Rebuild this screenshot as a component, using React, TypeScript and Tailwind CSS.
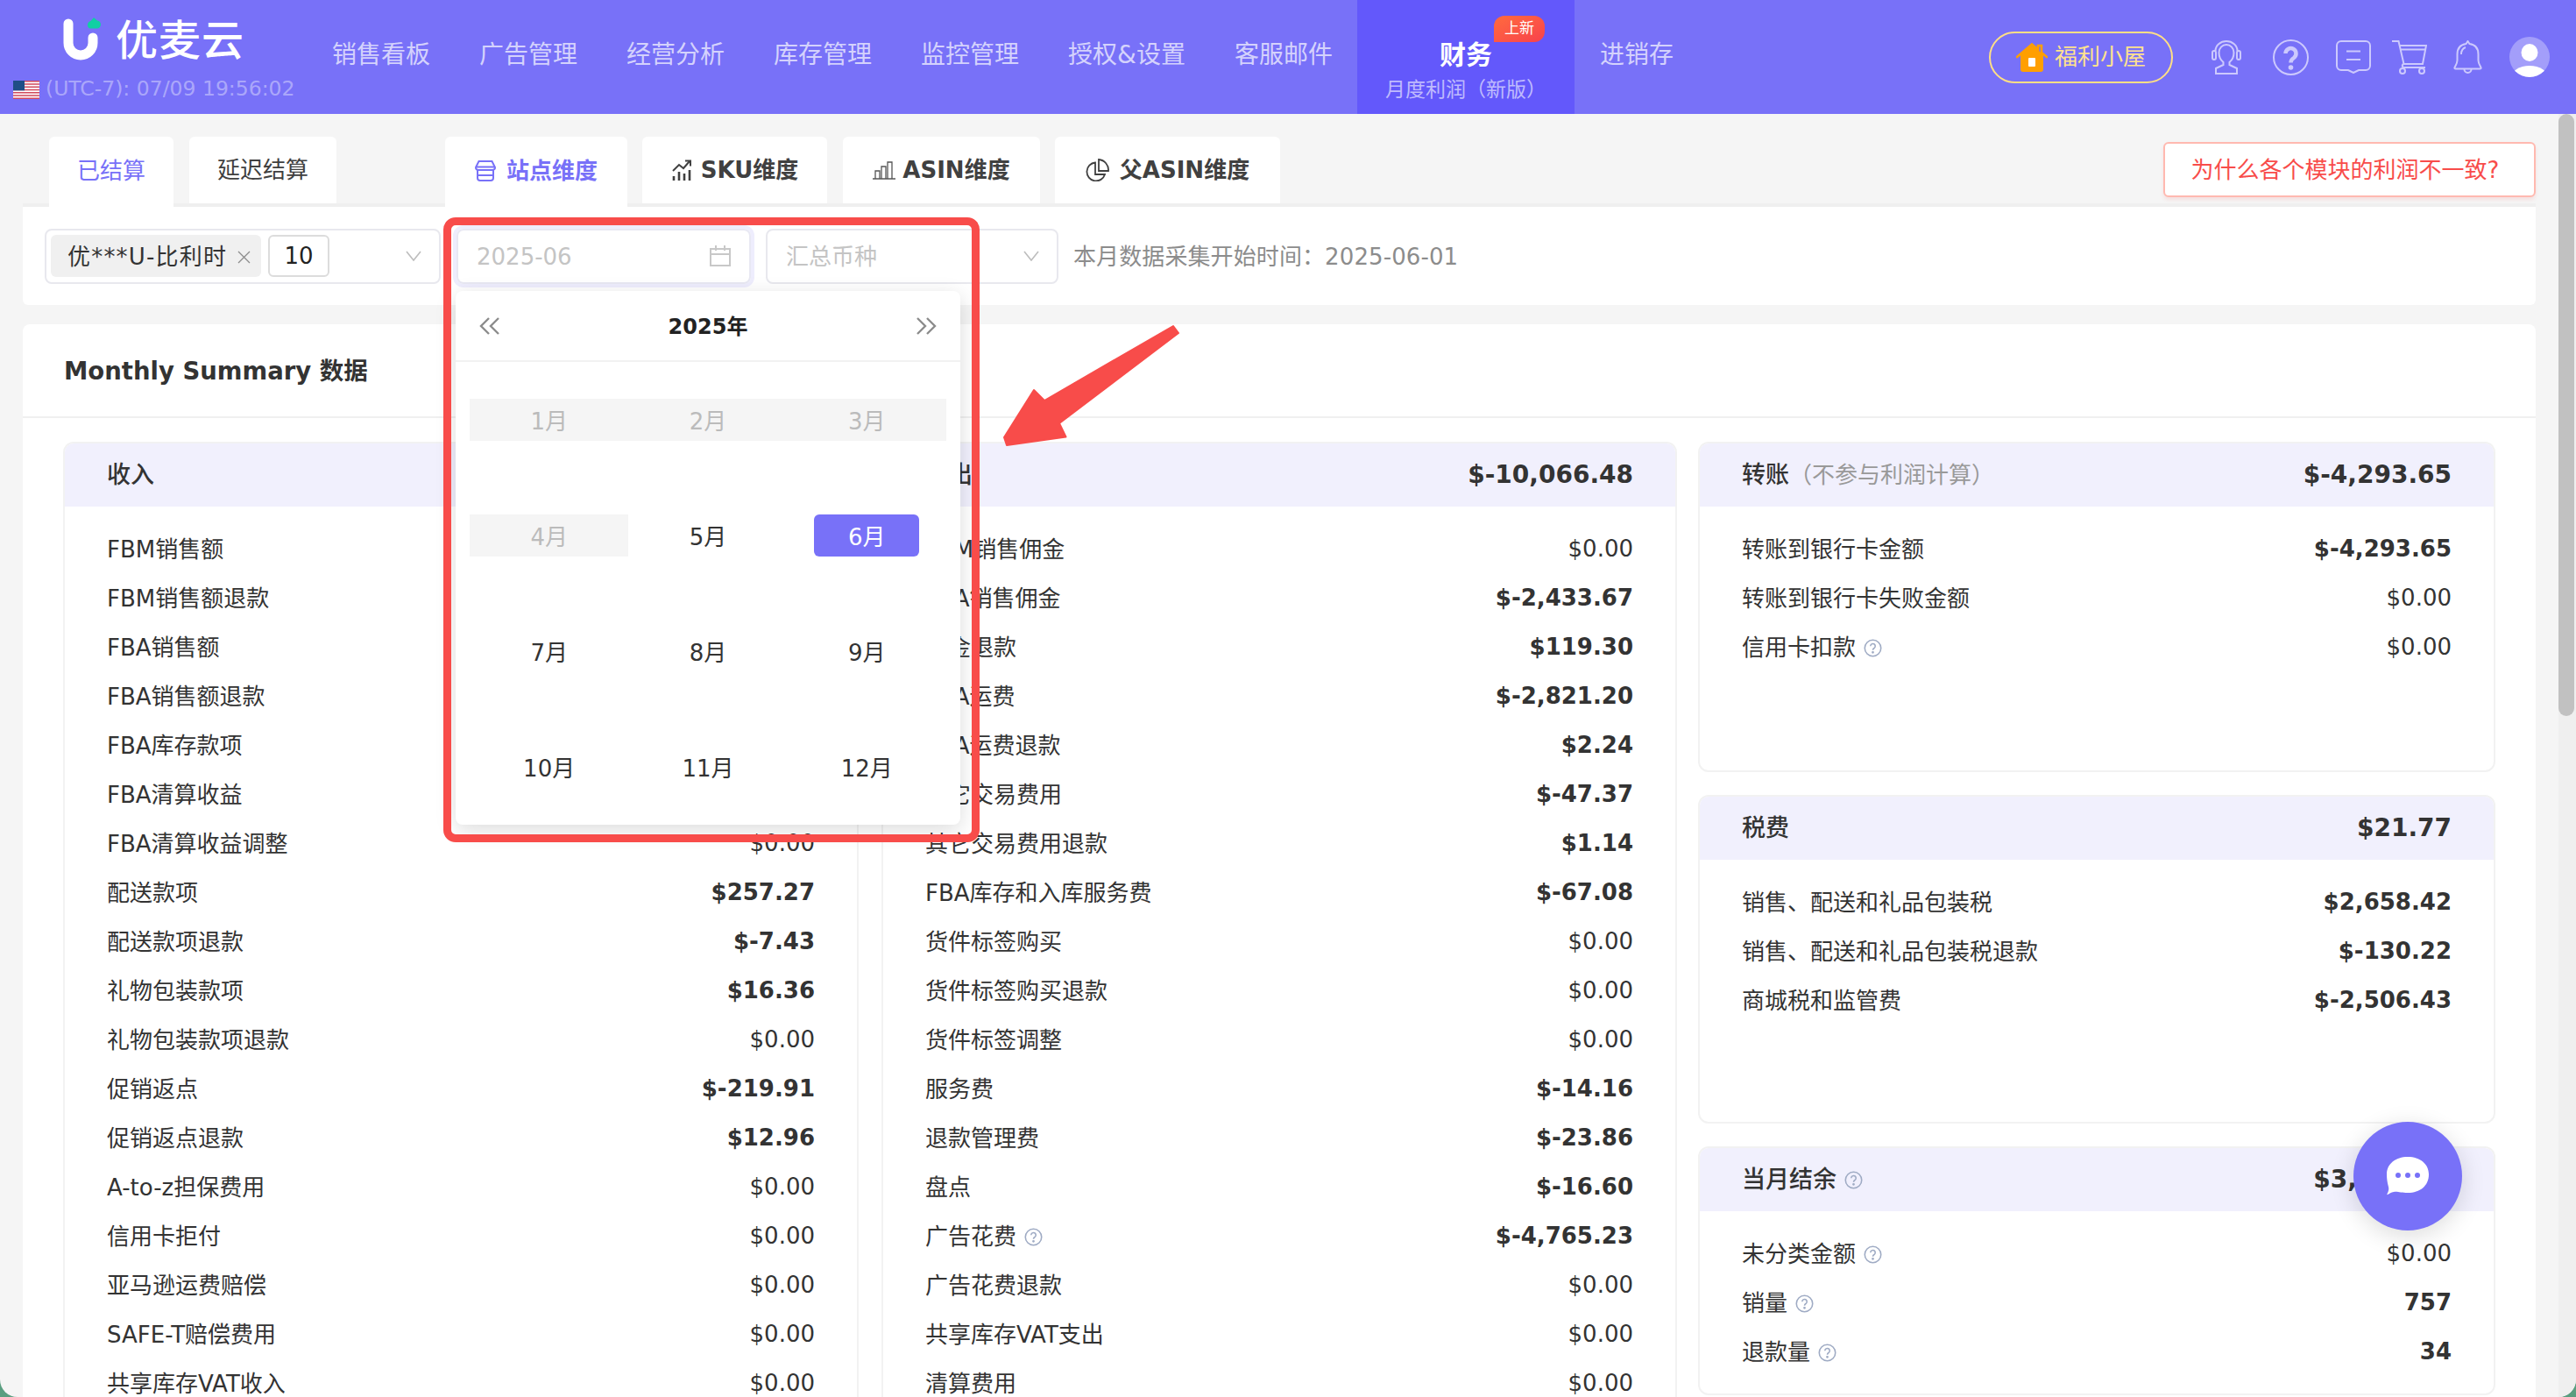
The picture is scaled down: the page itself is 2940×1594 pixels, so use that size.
import React from "react";

type Row = { l: string; v: string; b?: boolean; h?: boolean };

const nav = [
  { t: "销售看板" },
  { t: "广告管理" },
  { t: "经营分析" },
  { t: "库存管理" },
  { t: "监控管理" },
  { t: "授权&设置" },
  { t: "客服邮件" },
];

const income: Row[] = [
  { l: "FBM销售额", v: "" },
  { l: "FBM销售额退款", v: "" },
  { l: "FBA销售额", v: "" },
  { l: "FBA销售额退款", v: "" },
  { l: "FBA库存款项", v: "" },
  { l: "FBA清算收益", v: "" },
  { l: "FBA清算收益调整", v: "$0.00" },
  { l: "配送款项", v: "$257.27", b: true },
  { l: "配送款项退款", v: "$-7.43", b: true },
  { l: "礼物包装款项", v: "$16.36", b: true },
  { l: "礼物包装款项退款", v: "$0.00" },
  { l: "促销返点", v: "$-219.91", b: true },
  { l: "促销返点退款", v: "$12.96", b: true },
  { l: "A-to-z担保费用", v: "$0.00" },
  { l: "信用卡拒付", v: "$0.00" },
  { l: "亚马逊运费赔偿", v: "$0.00" },
  { l: "SAFE-T赔偿费用", v: "$0.00" },
  { l: "共享库存VAT收入", v: "$0.00" },
];

const expense: Row[] = [
  { l: "FBM销售佣金", v: "$0.00" },
  { l: "FBA销售佣金", v: "$-2,433.67", b: true },
  { l: "佣金退款", v: "$119.30", b: true },
  { l: "FBA运费", v: "$-2,821.20", b: true },
  { l: "FBA运费退款", v: "$2.24", b: true },
  { l: "其它交易费用", v: "$-47.37", b: true },
  { l: "其它交易费用退款", v: "$1.14", b: true },
  { l: "FBA库存和入库服务费", v: "$-67.08", b: true },
  { l: "货件标签购买", v: "$0.00" },
  { l: "货件标签购买退款", v: "$0.00" },
  { l: "货件标签调整", v: "$0.00" },
  { l: "服务费", v: "$-14.16", b: true },
  { l: "退款管理费", v: "$-23.86", b: true },
  { l: "盘点", v: "$-16.60", b: true },
  { l: "广告花费", v: "$-4,765.23", b: true, h: true },
  { l: "广告花费退款", v: "$0.00" },
  { l: "共享库存VAT支出", v: "$0.00" },
  { l: "清算费用", v: "$0.00" },
];

const transfer: Row[] = [
  { l: "转账到银行卡金额", v: "$-4,293.65", b: true },
  { l: "转账到银行卡失败金额", v: "$0.00" },
  { l: "信用卡扣款", v: "$0.00", h: true },
];

const tax: Row[] = [
  { l: "销售、配送和礼品包装税", v: "$2,658.42", b: true },
  { l: "销售、配送和礼品包装税退款", v: "$-130.22", b: true },
  { l: "商城税和监管费", v: "$-2,506.43", b: true },
];

const balance: Row[] = [
  { l: "未分类金额", v: "$0.00", h: true },
  { l: "销量", v: "757", b: true, h: true },
  { l: "退款量", v: "34", b: true, h: true },
];

const months = ["1月", "2月", "3月", "4月", "5月", "6月", "7月", "8月", "9月", "10月", "11月", "12月"];

const Help = () => (
  <svg width="21" height="21" viewBox="0 0 20 20" fill="none" stroke="#9fabc4" strokeWidth="1.5" className="ml-[9px] shrink-0">
    <circle cx="10" cy="10" r="8.8" />
    <path d="M7.4 7.8a2.6 2.6 0 1 1 4 2.2c-1 .6-1.4 1.1-1.4 2.2" />
    <circle cx="10" cy="14.6" r=".6" fill="#9fabc4" />
  </svg>
);

const Chevron = () => (
  <svg width="18" height="12" viewBox="0 0 18 12" fill="none" stroke="#bdbdbd" strokeWidth="1.6">
    <path d="M1 1l8 10 8-10" />
  </svg>
);

const DoubleChevron = ({ flip }: { flip?: boolean }) => (
  <svg width="24" height="20" viewBox="0 0 24 20" fill="none" stroke="#8c8c8c" strokeWidth="2.4" className={flip ? "rotate-180" : ""}>
    <path d="M11 1L2 10l9 9M22 1l-9 9 9 9" />
  </svg>
);

const Panel = ({
  title,
  sub,
  total,
  help,
  rows,
  h,
}: {
  title: string;
  sub?: string;
  total?: string;
  help?: boolean;
  rows: Row[];
  h?: string;
}) => (
  <div className={`rounded-[12px] border-2 border-[#f2f2f2] overflow-hidden shrink-0 ${h ?? ""}`}>
    <div className="h-[72px] bg-[#f1f0fd] flex items-center justify-between px-[48px]">
      <div className="flex items-center">
        <span className="text-[27px] font-medium text-[#333]">{title}</span>
        {sub && <span className="text-[26px] text-[#999]">{sub}</span>}
        {help && <Help />}
      </div>
      {total && <span className="text-[28px] font-bold text-[#333]">{total}</span>}
    </div>
    <div className="pt-[20px] pb-[20px] px-[48px]">
      {rows.map((r) => (
        <div key={r.l} className="h-[56px] flex items-center justify-between text-[26px] text-[#333]">
          <span className="flex items-center pt-[3px]">
            {r.l}
            {r.h && <Help />}
          </span>
          <span className={r.b ? "font-bold" : ""}>{r.v}</span>
        </div>
      ))}
    </div>
  </div>
);

const StoreIcon = () => (
  <svg width="24" height="24" viewBox="0 0 24 24" fill="none" stroke="#7871f8" strokeWidth="2" className="mr-[12px]">
    <path d="M4.500 1h15l3.500 7a3 3 0 0 1-2.800 3H3.800A3 3 0 0 1 1 8z" />
    <path d="M1.500 7.500h21M3 11v9a3 3 0 0 0 3 3h12a3 3 0 0 0 3-3v-9M3 17h18" />
  </svg>
);

const TrendIcon = () => (
  <svg width="24" height="24" viewBox="0 0 24 24" fill="none" stroke="#404040" strokeWidth="2.600" className="mr-[10px]">
    <path d="M2 13l7-7 5 4 7-8" strokeWidth="2" />
    <path d="M16 1.500h6v6" strokeWidth="2" />
    <path d="M3 24v-5M9 24v-10M15 24v-8M21 24v-12" />
  </svg>
);

const BarsIcon = () => (
  <svg width="26" height="22" viewBox="0 0 26 22" fill="none" stroke="#555" strokeWidth="1.300" className="mr-[8px]">
    <path d="M0 21h26M3 21v-9h5v9M10 21V7h5v14M17 21V2h5v19" />
  </svg>
);

const PieIcon = () => (
  <svg width="27" height="26" viewBox="0 0 27 26" fill="none" stroke="#404040" strokeWidth="1.800" className="mr-[12px]">
    <path d="M11 4.500a10.500 10.500 0 1 0 11 13.500H11z" />
    <path d="M15 1v13h11A12 12 0 0 0 15 1z" />
  </svg>
);

const Flag = () => (
  <svg width="30" height="21" viewBox="0 0 30 21" className="shrink-0">
    <rect width="30" height="21" fill="#fff" />
    <path
      d="M0 0h30v1.600H0zM0 3.200h30v1.600H0zM0 6.500h30v1.600H0zM0 9.700h30v1.600H0zM0 12.900h30v1.600H0zM0 16.200h30v1.600H0zM0 19.400h30V21H0z"
      fill="#d0495c"
    />
    <rect width="13" height="11.300" fill="#1f4e86" />
  </svg>
);

const Logo = () => (
  <svg width="44" height="52" viewBox="0 0 44 52" className="shrink-0">
    <path
      d="M7 7v22a14 14 0 0 0 28 0v-6"
      fill="none"
      stroke="#fff"
      strokeWidth="11"
      strokeLinecap="round"
    />
    <path d="M36 0l4 3.500c3 .4 4 2.500 4 4.500 0 2.600-2 4.500-4.500 4.500h-7C30 12.500 29 10.500 29 8.500c0-2.500 1.500-4 3.500-4.500z" fill="#11cfa3" />
  </svg>
);

const House = () => (
  <svg width="36" height="33" viewBox="0 0 36 33" className="shrink-0">
    <path d="M5 13L18 3l13 10v17a3 3 0 0 1-3 3H8a3 3 0 0 1-3-3z" fill="#ff9f00" />
    <path d="M1 16L18 1.500l7 6V3h4v8l6 5" fill="none" stroke="#ff9f00" strokeWidth="2.600" strokeLinecap="round" />
    <rect x="14" y="17" width="8" height="10" rx="1" fill="#fff" />
  </svg>
);

const ico = "#ccc9fd";

const Headset = () => (
  <svg width="34" height="39" viewBox="0 0 34 39" fill="none" stroke={ico} strokeWidth="2">
    <path d="M4.500 12a12.500 11 0 0 1 25 0" />
    <rect x="1" y="12" width="4" height="10" rx="2" />
    <rect x="29" y="12" width="4" height="10" rx="2" />
    <path d="M8.500 14a8.500 9 0 0 1 17 0c0 5-2.500 9-5 11v3l8.500 4v6H5v-6l8.500-4v-3c-2.500-2-5-6-5-11z" />
  </svg>
);

const Question = () => (
  <svg width="41" height="41" viewBox="0 0 41 41" fill="none" stroke={ico} strokeWidth="2">
    <circle cx="20.500" cy="20.500" r="19.500" />
    <path d="M14.500 16a6 6 0 1 1 9.500 5c-2.500 1.700-3.500 3-3.500 5.500" strokeWidth="4.500" />
    <circle cx="20.500" cy="32" r="2.800" fill={ico} stroke="none" />
  </svg>
);

const Message = () => (
  <svg width="40" height="38" viewBox="0 0 40 38" fill="none" stroke={ico} strokeWidth="2">
    <path d="M6 1h28a5 5 0 0 1 5 5v23a5 5 0 0 1-5 5h-8l-6 3-6-3H6a5 5 0 0 1-5-5V6a5 5 0 0 1 5-5z" />
    <path d="M12 12.500h16M12 22h16" />
  </svg>
);

const Cart = () => (
  <svg width="40" height="39" viewBox="0 0 40 39" fill="none" stroke={ico} strokeWidth="2">
    <path d="M0 1h7.500l6 26M9 6h30l-4 21H14c-3 0-3 4 0 4h24M10 10.500h28" />
    <circle cx="12" cy="35" r="3" />
    <circle cx="34" cy="35" r="3" />
  </svg>
);

const Bell = () => (
  <svg width="33" height="38" viewBox="0 0 33 38" fill="none" stroke={ico} strokeWidth="2">
    <path d="M16.500 1l2 3c7 1 10 6 10 12v7c0 3 2 6 3 8 .4 1-.3 1.500-1 1.500H2.500c-.7 0-1.400-.5-1-1.500 1-2 3-5 3-8v-7c0-6 3-11 10-12z" />
    <path d="M9 16c0-4 2-7 5-8M12.500 33a4 4 0 0 0 8 0" />
  </svg>
);

const Avatar = () => (
  <svg width="46" height="46" viewBox="0 0 46 46" className="shrink-0">
    <defs>
      <clipPath id="av">
        <circle cx="23" cy="23" r="23" />
      </clipPath>
    </defs>
    <circle cx="23" cy="23" r="23" fill="#fff" fillOpacity="0.32" />
    <ellipse cx="23" cy="18" rx="9.500" ry="10" fill="#fff" />
    <ellipse cx="23" cy="47" rx="21" ry="14" fill="#fff" clipPath="url(#av)" />
  </svg>
);

const Watermark = () => {
  const items: React.ReactNode[] = [];
  for (let k = -1; k < 20; k++) {
    const x = 168 + 145 * k;
    const base = (Math.abs(k) % 2 === 0 ? 95 : 37) + 2.4 * k;
    for (let n = -1; n < 15; n++) {
      const y = base + 110 * n;
      const left = x - 41;
      const top = y - 130 - 13;
      if (left < 10 || left > 2830 || top < 25 || top > 1420) continue;
      items.push(
        <span
          key={`${k}-${n}`}
          className="absolute text-[25px] rotate-[-31deg] text-black/[0.018] leading-none"
          style={{ left, top }}
        >
          17185
        </span>
      );
    }
  }
  return <div className="absolute left-0 right-0 top-[130px] bottom-0 overflow-hidden pointer-events-none z-30">{items}</div>;
};

const Tab = ({ active, children, cls }: { active?: boolean; children: React.ReactNode; cls: string }) => (
  <div
    className={`${cls} rounded-t-[6px] bg-white flex items-center justify-center text-[26px] ${
      active ? "h-[80px] pb-[2px] text-[#7871f8]" : "h-[76px] text-[#404040]"
    }`}
  >
    {children}
  </div>
);

export default function App() {
  return (
    <div className="relative w-[2940px] h-[1594px] overflow-hidden bg-[#5a9e80] font-['DejaVu_Sans','Noto_Sans_CJK_SC',sans-serif]">
      <div className="w-full h-full flex flex-col rounded-b-[20px] overflow-hidden bg-[#f5f5f5]">
        {/* header */}
        <header className="h-[130px] shrink-0 bg-[#7871f8] flex">
          <div className="w-[351px] shrink-0 pt-[20px]">
            <div className="flex items-center ml-[71px] h-[52px]">
              <Logo />
              <span className="ml-[17px] text-[48px] leading-[52px] font-medium text-white tracking-[1px]">优麦云</span>
            </div>
            <div className="mt-[15px] pl-[15px] h-[30px] flex items-center text-[23.5px] text-white/40 whitespace-nowrap">
              <Flag />
              <span className="ml-[7px]">(UTC-7): 07/09 19:56:02</span>
            </div>
          </div>
          {nav.map((n) => (
            <div key={n.t} className="px-[28px] flex items-center pb-[4px] text-[28px] text-white/70 whitespace-nowrap">
              {n.t}
            </div>
          ))}
          <div className="relative w-[248px] bg-[#6358fb] flex flex-col items-center pt-[43px]">
            <span className="text-[30px] leading-[40px] font-bold text-white">财务</span>
            <span className="mt-[4px] text-[23px] leading-[30px] text-white/60">月度利润（新版）</span>
            <span className="absolute left-[156px] top-[18px] w-[58px] h-[30px] rounded-t-[12px] rounded-br-[12px] bg-gradient-to-br from-[#ff6a3d] to-[#f8404c] flex items-center justify-center text-[17px] text-white">
              上新
            </span>
          </div>
          <div className="px-[29px] flex items-center pb-[4px] text-[28px] text-white/70">进销存</div>
          <div className="ml-auto flex items-center pr-[30px]">
            <div className="w-[210px] h-[59px] rounded-full border-2 border-[#ffdf85] flex items-center justify-center gap-[8px] text-[26px] text-[#ffe28e]">
              <House />
              福利小屋
            </div>
            <div className="ml-[44px]"><Headset /></div>
            <div className="ml-[36px]"><Question /></div>
            <div className="ml-[31px]"><Message /></div>
            <div className="ml-[24px]"><Cart /></div>
            <div className="ml-[30px]"><Bell /></div>
            <div className="ml-[31px]"><Avatar /></div>
          </div>
        </header>

        <div className="flex-1 min-h-0 flex">
          <main className="flex-1 min-w-0 px-[26px] pt-[26px] overflow-hidden">
            {/* tabs */}
            <div className="h-[80px] border-b-4 border-[#efefef] pl-[30px] flex items-start">
              <Tab active cls="w-[142px]">已结算</Tab>
              <Tab cls="w-[168px] ml-[18px]">延迟结算</Tab>
              <Tab active cls="w-[208px] ml-[124px] font-semibold">
                <StoreIcon />
                站点维度
              </Tab>
              <Tab cls="w-[211px] ml-[17px] font-semibold">
                <TrendIcon />
                SKU维度
              </Tab>
              <Tab cls="w-[225px] ml-[18px] font-semibold">
                <BarsIcon />
                ASIN维度
              </Tab>
              <Tab cls="w-[257px] ml-[17px] font-semibold">
                <PieIcon />
                父ASIN维度
              </Tab>
              <div className="ml-auto mt-[6px] w-[425px] h-[63px] rounded-[6px] border-2 border-[#ffb9b0] bg-white flex items-center justify-center pr-[10px] pt-[2px] text-[26px] text-[#f84c4a] shadow-[0_3px_4px_rgba(248,76,74,0.12)]">
                为什么各个模块的利润不一致?
              </div>
            </div>

            {/* filters */}
            <div className="h-[112px] bg-white rounded-b-[6px] flex items-center pl-[25px] text-[26px]">
              <div className="w-[452px] h-[63px] rounded-[8px] border-2 border-[#e8e8ee] flex items-center pl-[5px] pr-[20px]">
                <div className="w-[240px] h-[48px] rounded-[6px] bg-[#f0f0f0] flex items-center pl-[19px] pt-[2px] text-[#333] whitespace-nowrap tracking-[1.2px]">
                  优***U-比利时
                  <svg width="15" height="15" viewBox="0 0 15 15" stroke="#8c8c8c" strokeWidth="1.300" className="ml-[12px]">
                    <path d="M1 1l13 13M14 1L1 14" />
                  </svg>
                </div>
                <div className="ml-[8px] w-[70px] h-[48px] rounded-[6px] border-2 border-[#dcdcdc] flex items-center justify-center pt-[1px] text-[#222]">
                  10
                </div>
                <div className="ml-auto">
                  <Chevron />
                </div>
              </div>
              <div className="ml-[18px] w-[336px] h-[63px] rounded-[8px] border-2 border-[#e8e8f3] shadow-[0_0_0_4px_#eeedfd] flex items-center justify-between px-[21px] text-[#c4c4c4]">
                <span className="pt-[2px]">2025-06</span>
                <svg width="24" height="24" viewBox="0 0 24 24" fill="none" stroke="#c8c8c8" strokeWidth="2">
                  <path d="M1 4h22v19H1zM1 10h22M7 0v6M17 0v6" />
                </svg>
              </div>
              <div className="ml-[17px] w-[334px] h-[63px] rounded-[8px] border-2 border-[#e8e8ee] flex items-center justify-between pl-[21px] pr-[20px] text-[#c4c4c4]">
                <span className="pt-[2px]">汇总币种</span>
                <Chevron />
              </div>
              <div className="ml-[17px] pt-[2px] text-[#8c8c8c] whitespace-nowrap tracking-[0.1px]">本月数据采集开始时间：2025-06-01</div>
            </div>

            {/* summary */}
            <div className="mt-[22px] bg-white rounded-[8px]">
              <div className="h-[107px] border-b-2 border-[#f0f0f0] flex items-center pl-[47px] pt-[2px] text-[27.5px] font-bold text-[#333]">
                Monthly Summary 数据
              </div>
              <div className="pt-[27px] px-[46px] grid grid-cols-3 gap-[26px]">
                <Panel title="收入" rows={income} />
                <Panel title="支出" total="$-10,066.48" rows={expense} />
                <div className="flex flex-col gap-[26px] ml-[-2px]">
                  <Panel title="转账" sub="（不参与利润计算）" total="$-4,293.65" rows={transfer} h="h-[377px]" />
                  <Panel title="税费" total="$21.77" rows={tax} h="h-[375px]" />
                  <Panel title="当月结余" help total="$3,000.00" rows={balance} />
                </div>
              </div>
            </div>
          </main>
          <div className="w-[20px] shrink-0 bg-[#efefef]">
            <div className="w-[18px] h-[687px] rounded-full bg-[#c1c1c1]" />
          </div>
        </div>
      </div>

      {/* calendar popup */}
      <div className="absolute left-[520px] top-[332px] w-[576px] h-[609px] bg-white rounded-[8px] shadow-[0_6px_24px_rgba(0,0,0,0.14)] z-10">
        <div className="h-[81px] border-b-2 border-[#f2f2f2] flex items-center justify-between px-[27px]">
          <DoubleChevron />
          <span className="pt-[2px] text-[24px] font-bold text-[#222]">2025年</span>
          <DoubleChevron flip />
        </div>
        <div className="px-[16px] grid grid-cols-3">
          {months.map((m, i) => {
            const disabled = i < 4;
            const selected = i === 5;
            return (
              <div key={m} className="h-[132px] flex items-center justify-center text-[26px]">
                {selected ? (
                  <span className="w-[120px] h-[48px] pt-[4px] rounded-[6px] bg-[#7871f8] text-white flex items-center justify-center">{m}</span>
                ) : (
                  <span
                    className={`w-full h-[48px] pt-[4px] flex items-center justify-center ${
                      disabled ? "bg-[#f5f5f5] text-[#bbbbbb]" : "text-[#333]"
                    }`}
                  >
                    {m}
                  </span>
                )}
              </div>
            );
          })}
        </div>
      </div>

      {/* annotation */}
      <div className="absolute left-[506px] top-[248px] w-[612px] h-[713px] rounded-[14px] border-[9px] border-[#f84c4a] z-20 pointer-events-none" />
      <svg width="230" height="160" viewBox="0 0 230 160" className="absolute left-[1130px] top-[360px] z-20">
        <path
          d="M209 12L215 20L79 123L86.500 138.500L19 148L16 139L50 85L62 97Z"
          fill="#f84c4a"
          stroke="#f84c4a"
          strokeWidth="2"
          strokeLinejoin="round"
        />
      </svg>

      {/* chat button */}
      <div className="absolute left-[2686px] top-[1280px] w-[124px] h-[124px] rounded-full bg-[#7871f8] flex items-center justify-center shadow-[0_6px_28px_rgba(0,0,0,0.14)] z-20">
        <svg width="48" height="44" viewBox="0 0 48 44">
          <path
            d="M24 0c14 0 24 8 24 20 0 13-10 21-24 21-8 0-12-2-16-1-3 .6-5 2-7 3-.6.4-1 0-.6-.6 1.800-3.400 2.400-6 1.400-9C.8 30 0 25 0 20 0 8 10 0 24 0z"
            fill="#fff"
          />
          <circle cx="13" cy="21" r="3" fill="#7871f8" />
          <circle cx="24" cy="21" r="3" fill="#7871f8" />
          <circle cx="35" cy="21" r="3" fill="#7871f8" />
        </svg>
      </div>

      <Watermark />
    </div>
  );
}
